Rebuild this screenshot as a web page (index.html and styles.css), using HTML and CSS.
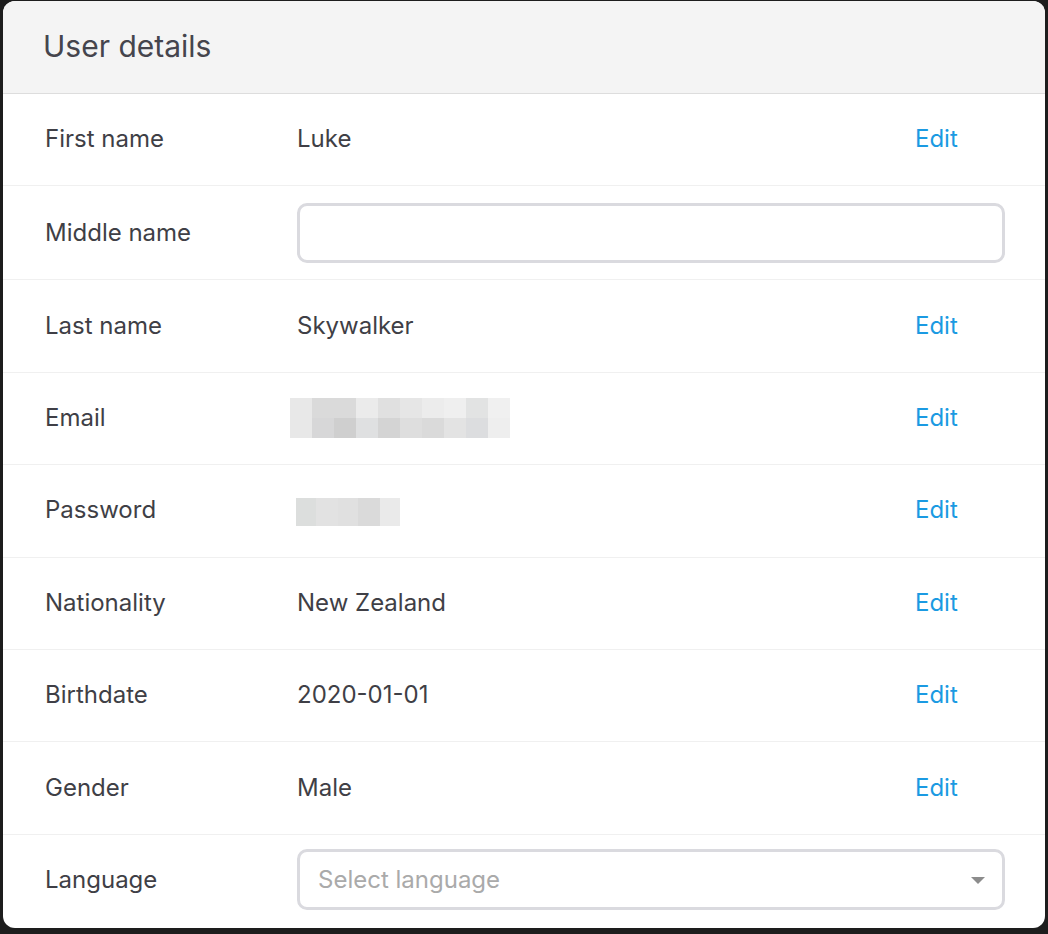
FILE: index.html
```html
<!DOCTYPE html>
<html lang="en">
<head>
<meta charset="utf-8">
<title>User details</title>
<link rel="stylesheet" href="styles.css">
</head>
<body>
<div class="card">
  <div class="card-header">User details</div>
  <div class="row">
    <div class="label">First name</div>
    <div class="value">Luke</div>
    <a class="edit" href="#">Edit</a>
  </div>
  <div class="row row-field">
    <div class="label">Middle name</div>
    <input class="field" type="text">
  </div>
  <div class="row">
    <div class="label">Last name</div>
    <div class="value">Skywalker</div>
    <a class="edit" href="#">Edit</a>
  </div>
  <div class="row">
    <div class="label">Email</div>
    <div class="value"><div class="pix pix-email">
      <i class="c1"></i><i class="c2"></i><i class="c2"></i><i class="c3"></i><i class="c4"></i><i class="c5"></i><i class="c6"></i><i class="c7"></i><i class="c8"></i><i class="c9"></i>
      <i class="c1"></i><i class="d1"></i><i class="d2"></i><i class="d3"></i><i class="d4"></i><i class="d5"></i><i class="d6"></i><i class="d7"></i><i class="d8"></i><i class="d9"></i>
    </div></div>
    <a class="edit" href="#">Edit</a>
  </div>
  <div class="row">
    <div class="label">Password</div>
    <div class="value"><div class="pix pix-pass">
      <i class="p1"></i><i class="p2"></i><i class="p3"></i><i class="p4"></i><i class="p5"></i>
    </div></div>
    <a class="edit" href="#">Edit</a>
  </div>
  <div class="row">
    <div class="label">Nationality</div>
    <div class="value">New Zealand</div>
    <a class="edit" href="#">Edit</a>
  </div>
  <div class="row">
    <div class="label">Birthdate</div>
    <div class="value">2020-01-01</div>
    <a class="edit" href="#">Edit</a>
  </div>
  <div class="row">
    <div class="label">Gender</div>
    <div class="value">Male</div>
    <a class="edit" href="#">Edit</a>
  </div>
  <div class="row row-field row-last">
    <div class="label">Language</div>
    <div class="select">
      <span class="placeholder">Select language</span>
      <svg class="caret" width="14" height="8" viewBox="0 0 14 8"><path d="M0 0H14L7 7Z" fill="#8c8c8c"/></svg>
    </div>
  </div>
</div>
</body>
</html>
```
FILE: styles.css
```css
html, body {
  margin: 0;
  background: #1d1d1d;
}
body {
  padding: 1px 3px 6px 3px;
  font-family: Inter, "Noto Sans", sans-serif;
  color: #3f3f46;
}
.card {
  background: #fff;
  border-radius: 12px;
  overflow: hidden;
  height: 927px;
  display: flex;
  flex-direction: column;
}
.card-header {
  background: #f4f4f4;
  border-bottom: 1px solid #dddddd;
  box-sizing: border-box;
  height: 93px;
  padding: 0 40px 2px 40px;
  display: flex;
  align-items: center;
  font-size: 30px;
  color: #45454d;
}
.row {
  display: grid;
  grid-template-columns: 252px 1fr 89px;
  align-items: center;
  padding: 0 40px 0 42px;
  height: 92.4px;
  box-sizing: border-box;
  border-bottom: 1px solid #f0f0f0;
  font-size: 24px;
  padding-bottom: 2px;
}
.row-field {
  height: 94px;
  padding-bottom: 0;
}
.row-last {
  border-bottom: none;
  flex: 1;
  padding-bottom: 3px;
}
.label {
  color: #3f3f46;
}
.value {
  color: #3f3f46;
}
.edit {
  color: #1b9ae2;
  text-decoration: none;
  margin-left: -1px;
}
.field, .select {
  grid-column: 2 / 4;
  height: 60px;
  box-sizing: border-box;
  border: 3px solid #dadadf;
  border-radius: 10px;
  background: #fff;
  font: inherit;
  margin: 0;
}
.select {
  display: flex;
  align-items: center;
  justify-content: space-between;
  padding: 0 17px 0 18px;
  height: 61px;
}
.placeholder {
  color: #aaaaaa;
}
.caret {
  display: block;
  margin-top: 2px;
}
.pix {
  display: grid;
}
.pix i {
  display: block;
}
.pix-email {
  grid-template-columns: repeat(10, 22px);
  grid-auto-rows: 20px;
  margin-left: -7px;
  margin-top: 2px;
  width: max-content;
}
.pix-pass {
  grid-template-columns: 20px 22px 20px 22px 20px;
  grid-auto-rows: 28px;
  margin-left: -1px;
  margin-top: 4px;
  width: max-content;
}
.c1 { background: #e8e8e8; }
.c2 { background: #dadada; }
.c3 { background: #ebebeb; }
.c4 { background: #e0e0e0; }
.c5 { background: #e6e6e6; }
.c6 { background: #ececec; }
.c7 { background: #efefef; }
.c8 { background: #e2e3e3; }
.c9 { background: #f0f0f0; }
.d1 { background: #d7d7d8; }
.d2 { background: #cfcfcf; }
.d3 { background: #dfe0e1; }
.d4 { background: #d4d4d4; }
.d5 { background: #dedede; }
.d6 { background: #dadada; }
.d7 { background: #e3e3e3; }
.d8 { background: #dcdddf; }
.d9 { background: #eeeeee; }
.p1 { background: #dcdedd; }
.p2 { background: #e2e2e2; }
.p3 { background: #e0e0e0; }
.p4 { background: #dadada; }
.p5 { background: #eaeaea; }
```
